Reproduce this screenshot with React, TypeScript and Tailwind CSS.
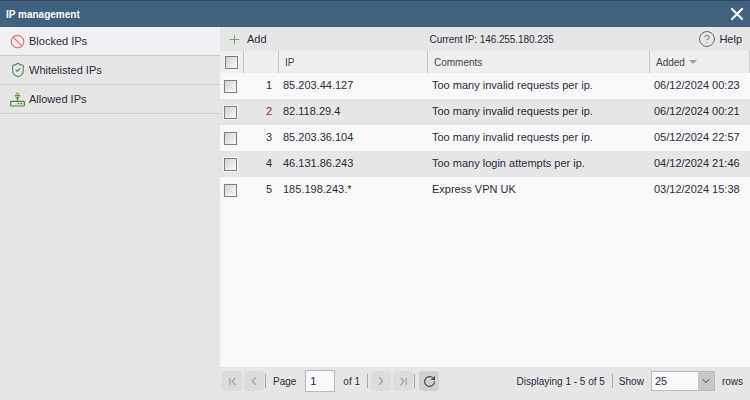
import { Plus, X, HelpCircle, ChevronFirst, ChevronLeft, ChevronRight, ChevronLast, RotateCw, ChevronDown, Ban, ShieldCheck } from "lucide-react";

const rows = [
  { n: 1, ip: "85.203.44.127", comment: "Too many invalid requests per ip.", added: "06/12/2024 00:23" },
  { n: 2, ip: "82.118.29.4", comment: "Too many invalid requests per ip.", added: "06/12/2024 00:21" },
  { n: 3, ip: "85.203.36.104", comment: "Too many invalid requests per ip.", added: "05/12/2024 22:57" },
  { n: 4, ip: "46.131.86.243", comment: "Too many login attempts per ip.", added: "04/12/2024 21:46" },
  { n: 5, ip: "185.198.243.*", comment: "Express VPN UK", added: "03/12/2024 15:38" },
];

function Check() {
  return <div className="w-[13px] h-[13px] border border-[#808080] bg-gradient-to-br from-[#d0d0d0] to-[#fbfbfb] outline outline-1 outline-[#f4f4f4]" />;
}

function Router() {
  return (
    <svg width="15" height="15" viewBox="0 0 15 15" fill="none" strokeWidth="1.2">
      <rect x="0.6" y="9.4" width="13.8" height="4.6" rx="0.8" stroke="#4d8a3e" />
      <path d="M7.5 9.4V4.5" stroke="#4d8a3e" />
      <path d="M4.8 4.2C6.4 3 8.6 3 10.2 4.2M6 5.9C6.9 5.3 8.1 5.3 9 5.9" stroke="#4d8a3e" />
      <path d="M5.6 1.5C6.8 1 8.2 1 9.4 1.5" stroke="#d98a3c" />
      <path d="M7.5 11.7h1.8M10.5 11.7h1.8" stroke="#4d8a3e" />
    </svg>
  );
}

function PageBtn({ children }: { children: React.ReactNode }) {
  return <div className="w-5 h-5 rounded-sm bg-[#dcdcdc] flex items-center justify-center text-[#a0a0a0]">{children}</div>;
}

function Sep() {
  return <div className="w-px h-[14px] bg-[#a8a8a8]" />;
}

export default function App() {
  return (
    <div className="w-[750px] h-[400px] flex flex-col overflow-hidden bg-[#e6e6e6] font-['Liberation_Sans',Arial,sans-serif] text-[11px] text-[#2b2b3a]">
      <div className="h-[27px] shrink-0 bg-[#41627f] border-t border-[#33495f] flex items-center justify-between pl-[6px] pr-[3px]">
        <span className="font-bold text-[10px] text-white">IP management</span>
        <X size={20} strokeWidth={2.6} className="text-white" />
      </div>
      <div className="flex flex-1 min-h-0">
        <div className="w-[220px] shrink-0">
          <div className="h-[29px] bg-[#f0f0f5] border-b border-[#cdcdcd] flex items-center pl-[10px] gap-[4px]">
            <Ban size={15} strokeWidth={2} className="text-[#e8706c]" />
            <span>Blocked IPs</span>
          </div>
          <div className="h-[29px] border-b border-[#cdcdcd] flex items-center pl-[10px] gap-[3px]">
            <ShieldCheck size={16} strokeWidth={1.6} className="text-[#4d8a5e]" />
            <span>Whitelisted IPs</span>
          </div>
          <div className="h-[29px] border-b border-[#cdcdcd] flex items-center pl-[10px] gap-[4px]">
            <Router />
            <span>Allowed IPs</span>
          </div>
        </div>
        <div className="flex-1 flex flex-col min-w-0">
          <div className="h-[24px] shrink-0 flex items-center bg-[#e6e6e6]">
            <Plus size={15} strokeWidth={1.3} className="text-[#5d9a5d] ml-[7px]" />
            <span className="ml-[5px]">Add</span>
            <span className="ml-[163px] text-[10px] tracking-[-0.08px]">Current IP: 146.255.180.235</span>
            <div className="ml-auto flex items-center gap-[3px] pr-[8px]">
              <HelpCircle size={18} strokeWidth={1.3} className="text-[#666]" />
              <span>Help</span>
            </div>
          </div>
          <div className="h-[22px] shrink-0 flex bg-[#efefef] text-[10px] text-[#444]">
            <div className="w-[24px] flex items-center pl-[5px] border-r border-[#c8c8c8]"><Check /></div>
            <div className="w-[35px] border-r border-[#c8c8c8]" />
            <div className="w-[149px] flex items-center pl-[6px] border-r border-[#c8c8c8]">IP</div>
            <div className="w-[222px] flex items-center pl-[6px] border-r border-[#c8c8c8]">Comments</div>
            <div className="flex-1 flex items-center pl-[6px] gap-[4px] border-r border-[#c8c8c8]">
              Added
              <div className="w-0 h-0 border-x-[4px] border-x-transparent border-t-[4px] border-t-[#a0a0a0]" />
            </div>
          </div>
          <div className="flex-1 bg-[#f9f9f9]">
            {rows.map((r, i) => (
              <div key={r.n} className={i % 2 === 1 ? "h-[26px] flex items-center bg-[#e6e6e6]" : "h-[26px] flex items-center"}>
                <div className="w-[24px] pl-[4px]"><Check /></div>
                <div className={r.n === 2 ? "w-[28px] pb-[2px] text-right text-[#8a2020]" : "w-[28px] pb-[2px] text-right"}>{r.n}</div>
                <div className="w-[149px] pb-[2px] pl-[11px]">{r.ip}</div>
                <div className="w-[222px] pb-[2px] pl-[11px]">{r.comment}</div>
                <div className="pb-[2px] pl-[11px] whitespace-nowrap">{r.added}</div>
              </div>
            ))}
          </div>
          <div className="h-[33px] shrink-0 flex items-center pl-[2px] pr-[7px] pb-[5px] bg-[#e6e6e6] text-[10px]">
            <PageBtn><ChevronFirst size={13} /></PageBtn>
            <div className="w-[2px]" />
            <PageBtn><ChevronLeft size={14} /></PageBtn>
            <div className="w-[1px]" />
            <Sep />
            <span className="ml-[7px]">Page</span>
            <div className="ml-[9px] w-[30px] h-[22px] border border-[#b8b8c8] bg-[#f9f9f9] flex items-center pl-[4px] text-[11px]">1</div>
            <span className="ml-[8px]">of 1</span>
            <div className="w-[7px]" />
            <Sep />
            <div className="w-[3px]" />
            <PageBtn><ChevronRight size={14} /></PageBtn>
            <div className="w-[2px]" />
            <PageBtn><ChevronLast size={13} /></PageBtn>
            <div className="w-[1px]" />
            <Sep />
            <div className="w-[4px]" />
            <div className="w-5 h-5 rounded-sm bg-[#d0d0d0] flex items-center justify-center text-[#444]"><RotateCw size={13} strokeWidth={2} /></div>
            <span className="ml-auto">Displaying 1 - 5 of 5</span>
            <div className="w-px h-[14px] bg-[#a8a8a8] ml-[7px] mr-[6px]" />
            <span>Show</span>
            <div className="ml-[7px] w-[64px] h-[20px] border border-[#b8b8c8] bg-[#f9f9f9] flex items-center justify-between pl-[3px] text-[11px]">
              <span className="pt-[1px]">25</span>
              <div className="w-[16px] h-full bg-[#c8c8c8] flex items-center justify-center"><ChevronDown size={12} strokeWidth={2} className="text-[#444]" /></div>
            </div>
            <span className="ml-[7px]">rows</span>
          </div>
        </div>
      </div>
    </div>
  );
}
